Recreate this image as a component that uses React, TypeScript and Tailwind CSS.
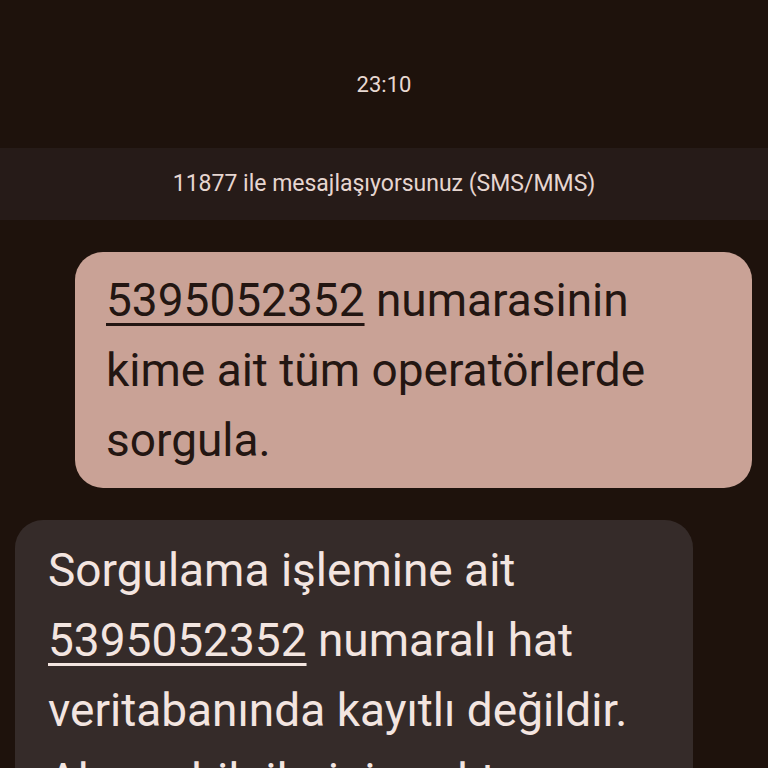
import React from 'react';

const Bubble = ({ side, children }: { side: 'out' | 'in'; children: React.ReactNode }) => {
  if (side === 'out') {
    return (
      <div className="flex shrink-0 justify-end pl-[75px] pr-[16px]">
        <div className="w-full rounded-[28px] bg-[#c9a296] px-[31px] py-[13px] text-[46px] leading-[70px] text-[#231612]">
          {children}
        </div>
      </div>
    );
  }
  return (
    <div className="flex shrink-0 justify-start pl-[15px] pr-[75px]">
      <div className="w-full rounded-t-[28px] rounded-br-[28px] bg-[#352b29] px-[33px] pt-[15px] pb-[20px] text-[46px] leading-[70px] text-[#f3e5e0]">
        {children}
      </div>
    </div>
  );
};

export default function App() {
  return (
    <div
      className="h-[768px] w-[768px] overflow-hidden bg-[#1e120c] flex flex-col"
      style={{ fontFamily: 'Roboto, "Noto Sans", sans-serif' }}
    >
      <div className="shrink-0 pt-[71px] text-center text-[22px] leading-[28px] text-[#e8d9d2]">23:10</div>

      <div className="mt-[49px] flex h-[72px] shrink-0 items-center justify-center bg-[#261b18] text-[23px] text-[#e6d6d0]">
        11877 ile mesajlaşıyorsunuz (SMS/MMS)
      </div>

      <div className="mt-[32px] flex shrink-0 flex-col gap-[32px]">
        <Bubble side="out">
          <span className="underline decoration-[3px] underline-offset-[7px]">5395052352</span> numarasinin kime ait tüm operatörlerde sorgula.
        </Bubble>
        <Bubble side="in">
          Sorgulama işlemine ait{' '}
          <span className="underline decoration-[3px] underline-offset-[7px]">5395052352</span> numaralı hat veritabanında kayıtlı değildir. Abone bilgileriniz yoktur.
        </Bubble>
      </div>
    </div>
  );
}
